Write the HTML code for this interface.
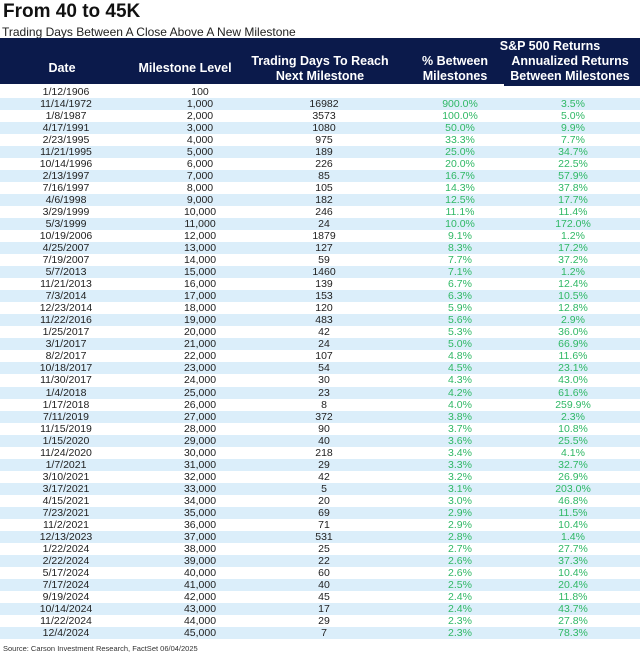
<!DOCTYPE html>
<html><head><meta charset="utf-8"><style>
*{margin:0;padding:0;box-sizing:border-box}
body{width:640px;height:659px;background:#fff;font-family:"Liberation Sans",Arial,sans-serif;position:relative;overflow:hidden;color:#222}
.t{position:absolute;left:3px;top:1px;font-size:19px;font-weight:bold;color:#111}
.s{position:absolute;left:2px;top:25px;font-size:12px;color:#222}
.h{position:absolute;left:0;top:38px;width:640px;height:46px;background:#0b1a4b;color:#fff;font-weight:bold;font-size:12.5px}
.h2{position:absolute;left:504px;top:83px;width:136px;height:3px;background:#0b1a4b}
.h div{position:absolute;text-align:center;line-height:15px}
.r{position:absolute;left:0;width:640px;height:12px;font-size:10.5px;line-height:12px}
.r.b{background:#dbeefa}
.r span{position:absolute;text-align:center;width:120px}
.g{color:#2fb865}
.src{position:absolute;left:3px;top:644px;font-size:7.5px;color:#333}
</style></head><body>
<div class="t">From 40 to 45K</div>
<div class="s">Trading Days Between A Close Above A New Milestone</div>
<div class="h">
<div style="left:2px;width:120px;top:23px">Date</div>
<div style="left:125px;width:120px;top:23px">Milestone Level</div>
<div style="left:240px;width:160px;top:16px">Trading Days To Reach<br>Next Milestone</div>
<div style="left:400px;width:110px;top:16px">% Between<br>Milestones</div>
<div style="left:460px;width:180px;top:1px">S&amp;P 500 Returns</div>
<div style="left:500px;width:140px;top:16px">Annualized Returns<br>Between Milestones</div>
</div>
<div class="h2"></div>
<div id="rows"></div>
<div class="src">Source: Carson Investment Research, FactSet 06/04/2025</div>
<script>
var d=[["1/12/1906","100","","",""],["11/14/1972","1,000","16982","900.0%","3.5%"],["1/8/1987","2,000","3573","100.0%","5.0%"],["4/17/1991","3,000","1080","50.0%","9.9%"],["2/23/1995","4,000","975","33.3%","7.7%"],["11/21/1995","5,000","189","25.0%","34.7%"],["10/14/1996","6,000","226","20.0%","22.5%"],["2/13/1997","7,000","85","16.7%","57.9%"],["7/16/1997","8,000","105","14.3%","37.8%"],["4/6/1998","9,000","182","12.5%","17.7%"],["3/29/1999","10,000","246","11.1%","11.4%"],["5/3/1999","11,000","24","10.0%","172.0%"],["10/19/2006","12,000","1879","9.1%","1.2%"],["4/25/2007","13,000","127","8.3%","17.2%"],["7/19/2007","14,000","59","7.7%","37.2%"],["5/7/2013","15,000","1460","7.1%","1.2%"],["11/21/2013","16,000","139","6.7%","12.4%"],["7/3/2014","17,000","153","6.3%","10.5%"],["12/23/2014","18,000","120","5.9%","12.8%"],["11/22/2016","19,000","483","5.6%","2.9%"],["1/25/2017","20,000","42","5.3%","36.0%"],["3/1/2017","21,000","24","5.0%","66.9%"],["8/2/2017","22,000","107","4.8%","11.6%"],["10/18/2017","23,000","54","4.5%","23.1%"],["11/30/2017","24,000","30","4.3%","43.0%"],["1/4/2018","25,000","23","4.2%","61.6%"],["1/17/2018","26,000","8","4.0%","259.9%"],["7/11/2019","27,000","372","3.8%","2.3%"],["11/15/2019","28,000","90","3.7%","10.8%"],["1/15/2020","29,000","40","3.6%","25.5%"],["11/24/2020","30,000","218","3.4%","4.1%"],["1/7/2021","31,000","29","3.3%","32.7%"],["3/10/2021","32,000","42","3.2%","26.9%"],["3/17/2021","33,000","5","3.1%","203.0%"],["4/15/2021","34,000","20","3.0%","46.8%"],["7/23/2021","35,000","69","2.9%","11.5%"],["11/2/2021","36,000","71","2.9%","10.4%"],["12/13/2023","37,000","531","2.8%","1.4%"],["1/22/2024","38,000","25","2.7%","27.7%"],["2/22/2024","39,000","22","2.6%","37.3%"],["5/17/2024","40,000","60","2.6%","10.4%"],["7/17/2024","41,000","40","2.5%","20.4%"],["9/19/2024","42,000","45","2.4%","11.8%"],["10/14/2024","43,000","17","2.4%","43.7%"],["11/22/2024","44,000","29","2.3%","27.8%"],["12/4/2024","45,000","7","2.3%","78.3%"]];
var h="",c=[66,200,324,460,573];
d.forEach(function(r,i){h+='<div class="r'+(i%2?' b':'')+'" style="top:'+(86+i*12.02)+'px">';
r.forEach(function(v,j){h+='<span'+(j>2?' class="g"':'')+' style="left:'+(c[j]-60)+'px">'+v+'</span>'});h+='</div>'});
document.getElementById("rows").innerHTML=h;
</script>
</body></html>
